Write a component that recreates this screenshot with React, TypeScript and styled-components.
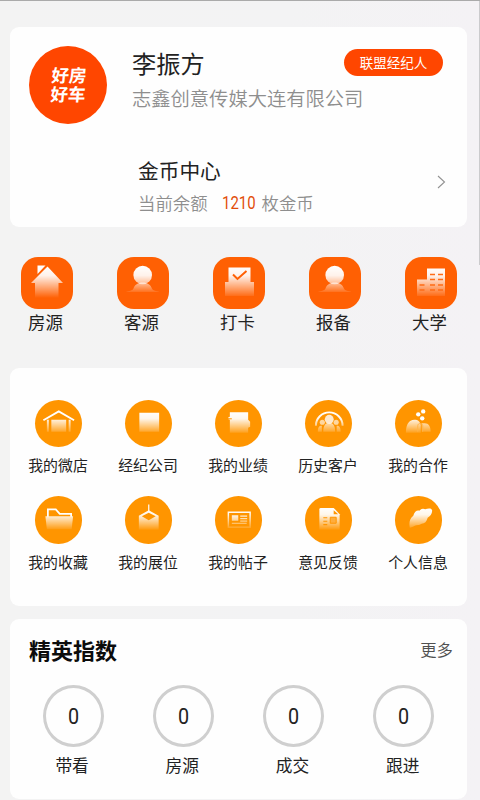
import React from 'react';
import styled, { createGlobalStyle } from 'styled-components';

const GlobalStyle = createGlobalStyle`
  * { box-sizing: border-box; }
  html, body { margin: 0; padding: 0; background: #f3f3f4; }
  body { overflow: hidden; }
`;

const Page = styled.main`
  position: relative;
  width: 480px;
  height: 800px;
  overflow: hidden;
  padding: 26px 13px 0 10px;
  border-top: 1px solid #aaa;
  background: linear-gradient(90deg, #f3f3f3 0%, #f3f3f4 60%, #f4f2f5 100%);
  font-family: 'Noto Sans CJK SC', sans-serif;
  font-weight: 400;
  color: #222;
`;

const ScrollThumb = styled.div`
  position: absolute;
  top: 0;
  right: 0;
  width: 1px;
  height: 264px;
  background: #cbcbcd;
`;

const Card = styled.section<{ $height: number; $gap?: number }>`
  height: ${(p) => p.$height}px;
  margin-top: ${(p) => p.$gap ?? 0}px;
  border-radius: 9px;
  background: #fefefe;
`;

const ProfileRow = styled.header`
  display: flex;
  height: 118px;
  padding: 19px 24px 0 19px;
`;

const Avatar = styled.div`
  display: flex;
  flex-direction: column;
  align-items: center;
  justify-content: center;
  flex: none;
  width: 78px;
  height: 78px;
  padding-bottom: 1px;
  border-radius: 50%;
  background: #ff4600;
  color: #fff;
  font-size: 17.5px;
  font-weight: 700;
  line-height: 18.5px;
`;

const AvatarLine = styled.span<{ $shift: number }>`
  transform: translateX(${(p) => p.$shift}px) skewX(-5deg);
`;

const Identity = styled.div`
  flex: 1;
  margin-left: 25px;
  white-space: nowrap;
`;

const NameRow = styled.div`
  display: flex;
  justify-content: space-between;
  height: 37px;
`;

const Name = styled.h1`
  margin: 0;
  font-size: 24.2px;
  font-weight: 400;
  line-height: 34px;
`;

const Badge = styled.span`
  width: 99px;
  height: 27px;
  margin-top: 3px;
  border-radius: 14px;
  background: #ff4600;
  color: #fff;
  font-size: 13.5px;
  font-weight: 400;
  line-height: 26px;
  text-align: center;
`;

const Company = styled.div`
  font-size: 19.3px;
  font-weight: 350;
  line-height: 30px;
  color: #8e8e8e;
`;

const CoinRow = styled.div`
  display: flex;
  align-items: center;
  justify-content: space-between;
  padding: 0 21px 0 128px;
`;

const CoinTitle = styled.h2`
  margin: 9px 0 0;
  font-size: 20.7px;
  font-weight: 400;
  line-height: 32px;
`;

const Balance = styled.div`
  display: flex;
  font-size: 17.4px;
  font-weight: 350;
  line-height: 33px;
  color: #8e8e8e;
`;

const Amount = styled.span`
  width: 33px;
  margin: 0 7px 0 14px;
  color: #e24d0a;
  font-family: Roboto, sans-serif;
  font-weight: 400;
  font-size: 18px;
  transform: scaleX(0.83);
  transform-origin: left;
`;

const Shortcuts = styled.nav`
  display: flex;
  justify-content: space-between;
  margin-top: 30px;
  padding: 0 10px 0 10px;
`;

const Shortcut = styled.div`
  display: flex;
  flex-direction: column;
  align-items: center;
  width: 53px;
  font-size: 17.4px;
  line-height: 26px;
`;

const ShortcutTile = styled.svg`
  width: 52px;
  height: 52px;
  border-radius: 17px;
  background: #ff6003;
`;

const ShortcutLabel = styled.span`
  margin-left: -2px;
`;

const ToolGrid = styled.div`
  display: grid;
  grid-template-columns: repeat(5, 90px);
  grid-auto-rows: 96.5px;
  padding: 31.5px 0 0 3.5px;
`;

const Tool = styled.div`
  display: flex;
  flex-direction: column;
  align-items: center;
  font-size: 14.9px;
  line-height: 36px;
  white-space: nowrap;
`;

const ToolDisc = styled.svg`
  flex: none;
  width: 47.5px;
  height: 47.5px;
  border-radius: 50%;
  background: #ff9500;
`;

const ToolLabel = styled.span`
  margin-left: -1px;
`;

const IndexHeader = styled.header`
  display: flex;
  align-items: center;
  justify-content: space-between;
  height: 60px;
  padding: 0 14px 0 19px;
`;

const IndexTitle = styled.h2`
  margin: 0;
  color: #0c0c0c;
  font-size: 22px;
  font-weight: 700;
`;

const More = styled.span`
  color: #505050;
  font-size: 16.4px;
  font-weight: 350;
`;

const Stats = styled.div`
  display: grid;
  grid-template-columns: repeat(4, 110.2px);
  padding: 6px 0 0 8px;
`;

const Stat = styled.div`
  display: flex;
  flex-direction: column;
  align-items: center;
  font-size: 16.7px;
  line-height: 36px;
`;

const Ring = styled.div`
  width: 61px;
  height: 62px;
  border: 3px solid #cfcfcf;
  border-radius: 50%;
  text-align: center;
`;

const StatValue = styled.span`
  display: block;
  font-family: Roboto, sans-serif;
  font-weight: 400;
  font-size: 21.5px;
  line-height: 57px;
  transform: scaleX(0.92);
`;

const StatLabel = styled.span`
  margin-left: -2px;
`;

/** Vertical fade shared by the icons of one group: opaque white down to the tile colour. */
const Fade = ({ id, top, bottom }: { id: string; top: number; bottom: number }) => (
  <defs>
    <linearGradient id={id} gradientUnits="userSpaceOnUse" x1="0" x2="0" y1={top} y2={bottom}>
      <stop offset="0" stopColor="#fff" />
      <stop offset="0.3" stopColor="#fff" stopOpacity="0.92" />
      <stop offset="1" stopColor="#fff" stopOpacity="0" />
    </linearGradient>
  </defs>
);

const person = (
  <>
    <circle cx="25.700" cy="18" r="9.300" fill="url(#tile)" />
    <path d="M9 35c3-1.500 6.500-1 7.500-3.500 1-3.500 4.500-6 9.200-6s8.200 2.500 9.200 6c1 2.500 4.500 2 7.500 3.500z" fill="url(#body)" />
  </>
);

const shortcuts: { label: string; icon: React.ReactNode }[] = [
  {
    label: '房源',
    icon: (
      <>
        <path d="M16.500 8.500h8L16.500 17z" fill="#fff" />
        <path d="M26.500 9.500 42 26h-4.500v15H14V26h-4z" fill="url(#tile)" />
      </>
    ),
  },
  { label: '客源', icon: person },
  {
    label: '打卡',
    icon: (
      <>
        <path d="M15.500 10.500h22V25h-22z" fill="url(#tile)" />
        <path d="M12 25h29v14H12z" fill="url(#tile)" />
        <path d="m20 17.500 4.500 4.500 9-8" fill="none" stroke="#ff6003" strokeWidth="2" />
      </>
    ),
  },
  { label: '报备', icon: person },
  {
    label: '大学',
    icon: (
      <>
        <path d="M22 11.500h18V39H12V22.500h10z" fill="url(#tile)" />
        <path
          d="M25 17.500h5m3 0h5M25 22.500h5m3 0h5M25 28h5m3 0h5M25 33h5m3 0h5M14.500 28h5m-5 5h5"
          stroke="#ff6c16"
          strokeWidth="1.300"
        />
      </>
    ),
  },
];

const tools: { label: string; icon: React.ReactNode }[] = [
  {
    label: '我的微店',
    icon: (
      <>
        <path d="m8.500 20.500 15.500-9 15.500 9" fill="none" stroke="#fff" strokeWidth="1.800" />
        <path d="M12 20h2v12h-2zm22 0h2v12h-2zM16.500 20h15v12h-15z" fill="url(#disc)" />
      </>
    ),
  },
  { label: '经纪公司', icon: <path d="M14.500 13h20v19h-20z" fill="url(#disc)" /> },
  {
    label: '我的业绩',
    icon: (
      <>
        <path d="M15 12.500h18.500v7.500l2 2v5l-2 1v5H15V20l-1.500-.5v-2l1.500-.5z" fill="url(#disc)" />
        <path d="M13 19h4" stroke="#ff9500" />
      </>
    ),
  },
  {
    label: '历史客户',
    icon: (
      <>
        <path d="M11 26a13.500 13.500 0 1 1 27 0" fill="none" stroke="url(#disc)" strokeWidth="2" />
        <circle cx="24.500" cy="19.500" r="4.500" fill="#ffe9cd" />
        <circle cx="17.500" cy="22.500" r="2.600" fill="#ffd79f" />
        <circle cx="31.500" cy="22.500" r="2.600" fill="#ffd79f" />
        <path d="M18.500 32c0-6 2-9 6-9s6 3 6 9zM13 32c0-4 1-6 4-6v6zm19 0v-6c3 0 4 2 4 6z" fill="url(#disc)" />
      </>
    ),
  },
  {
    label: '我的合作',
    icon: (
      <>
        <g fill="#fff">
          <circle cx="28.500" cy="11.500" r="2.200" />
          <circle cx="23.500" cy="14.500" r="2.200" />
          <circle cx="27.500" cy="18.500" r="2.200" />
        </g>
        <path d="M11 33c0-8 3-13 8.500-13 4 0 6 2 6.500 5.500V33z" fill="url(#disc)" />
        <path d="M27 32v-8.500h3c4 0 6 3.500 6 8.500z" fill="url(#disc)" />
        <path d="M23 32v-6c0-3 5-3 5 0v6" fill="none" stroke="#ffb449" />
      </>
    ),
  },
  {
    label: '我的收藏',
    icon: (
      <>
        <path d="M13 21v-7.500h8l4 4.500h11.500v3" fill="none" stroke="#fff" strokeWidth="1.800" />
        <path d="M10.500 20.500h28l-1.500 13H12z" fill="url(#disc)" />
      </>
    ),
  },
  {
    label: '我的展位',
    icon: (
      <>
        <path d="M24 8.500v7" stroke="#fff" strokeWidth="1.200" />
        <path
          d="M24 14.500 34 20v14H14V20zm0 2.500-7 3.500 7 4 7-4z"
          fill="url(#disc)"
          fillRule="evenodd"
        />
      </>
    ),
  },
  {
    label: '我的帖子',
    icon: (
      <>
        <path d="M13.500 16.500h22v15h-22z" fill="none" stroke="url(#disc)" strokeWidth="1.500" />
        <path d="M17 19.500h6.500V25H17zm8.500 .2h7V21h-7zm0 2.500h7v1.300h-7zm0 2.500h7V26h-7zM17 27h15v1.300H17z" fill="url(#disc)" />
      </>
    ),
  },
  {
    label: '意见反馈',
    icon: (
      <>
        <path d="M16 12h13l6 6.500V34H14.500V13.500q0-1.500 1.500-1.500z" fill="url(#disc)" />
        <path d="M29 14.500v4h4.500z" fill="#ff9500" />
        <path d="M18.500 22h4m-4 3.500h4m-4 3.500h4" stroke="#ff9500" strokeWidth="1.200" />
        <path d="M25.500 21.500h6v6h-6z" fill="#ffad3d" stroke="#ff9500" />
      </>
    ),
  },
  {
    label: '个人信息',
    icon: (
      <path
        d="M15 32c-1-4-.5-9 3.500-12 1-4 4-6 6-5 2-2.500 4.500-2.500 6-1.500 2.500-1 6.500-1.500 7 1 .3 3-2 6-4.500 7.500-1 4-3 6-6 6-3 2-5 1-7 2-2 1.500-3.500 1.500-5 2z"
        fill="url(#disc)"
      />
    ),
  },
];

const stats = [
  { label: '带看', value: 0 },
  { label: '房源', value: 0 },
  { label: '成交', value: 0 },
  { label: '跟进', value: 0 },
];

export default function App() {
  return (
    <Page>
      <GlobalStyle />
      <ScrollThumb />
      <svg width="0" height="0" style={{ position: 'absolute' }} aria-hidden="true">
        <Fade id="tile" top={9} bottom={41} />
        <Fade id="body" top={12} bottom={37} />
        <Fade id="disc" top={12} bottom={35} />
      </svg>

      <Card $height={200}>
        <ProfileRow>
          <Avatar>
            <AvatarLine $shift={0.5}>好房</AvatarLine>
            <AvatarLine $shift={-0.5}>好车</AvatarLine>
          </Avatar>
          <Identity>
            <NameRow>
              <Name>李振方</Name>
              <Badge>联盟经纪人</Badge>
            </NameRow>
            <Company>志鑫创意传媒大连有限公司</Company>
          </Identity>
        </ProfileRow>
        <CoinRow>
          <div>
            <CoinTitle>金币中心</CoinTitle>
            <Balance>
              当前余额<Amount>1210</Amount>枚金币
            </Balance>
          </div>
          <svg width="10" height="16" viewBox="0 0 10 16" fill="none">
            <path d="m2 2 6.500 6L2 14" stroke="#929292" strokeWidth="1.100" />
          </svg>
        </CoinRow>
      </Card>

      <Shortcuts>
        {shortcuts.map(({ label, icon }) => (
          <Shortcut key={label}>
            <ShortcutTile viewBox="0 0 52 52">{icon}</ShortcutTile>
            <ShortcutLabel>{label}</ShortcutLabel>
          </Shortcut>
        ))}
      </Shortcuts>

      <Card $height={238} $gap={33}>
        <ToolGrid>
          {tools.map(({ label, icon }) => (
            <Tool key={label}>
              <ToolDisc viewBox="0 0 48 48">{icon}</ToolDisc>
              <ToolLabel>{label}</ToolLabel>
            </Tool>
          ))}
        </ToolGrid>
      </Card>

      <Card $height={180} $gap={13}>
        <IndexHeader>
          <IndexTitle>精英指数</IndexTitle>
          <More>更多</More>
        </IndexHeader>
        <Stats>
          {stats.map(({ label, value }) => (
            <Stat key={label}>
              <Ring>
                <StatValue>{value}</StatValue>
              </Ring>
              <StatLabel>{label}</StatLabel>
            </Stat>
          ))}
        </Stats>
      </Card>
    </Page>
  );
}
